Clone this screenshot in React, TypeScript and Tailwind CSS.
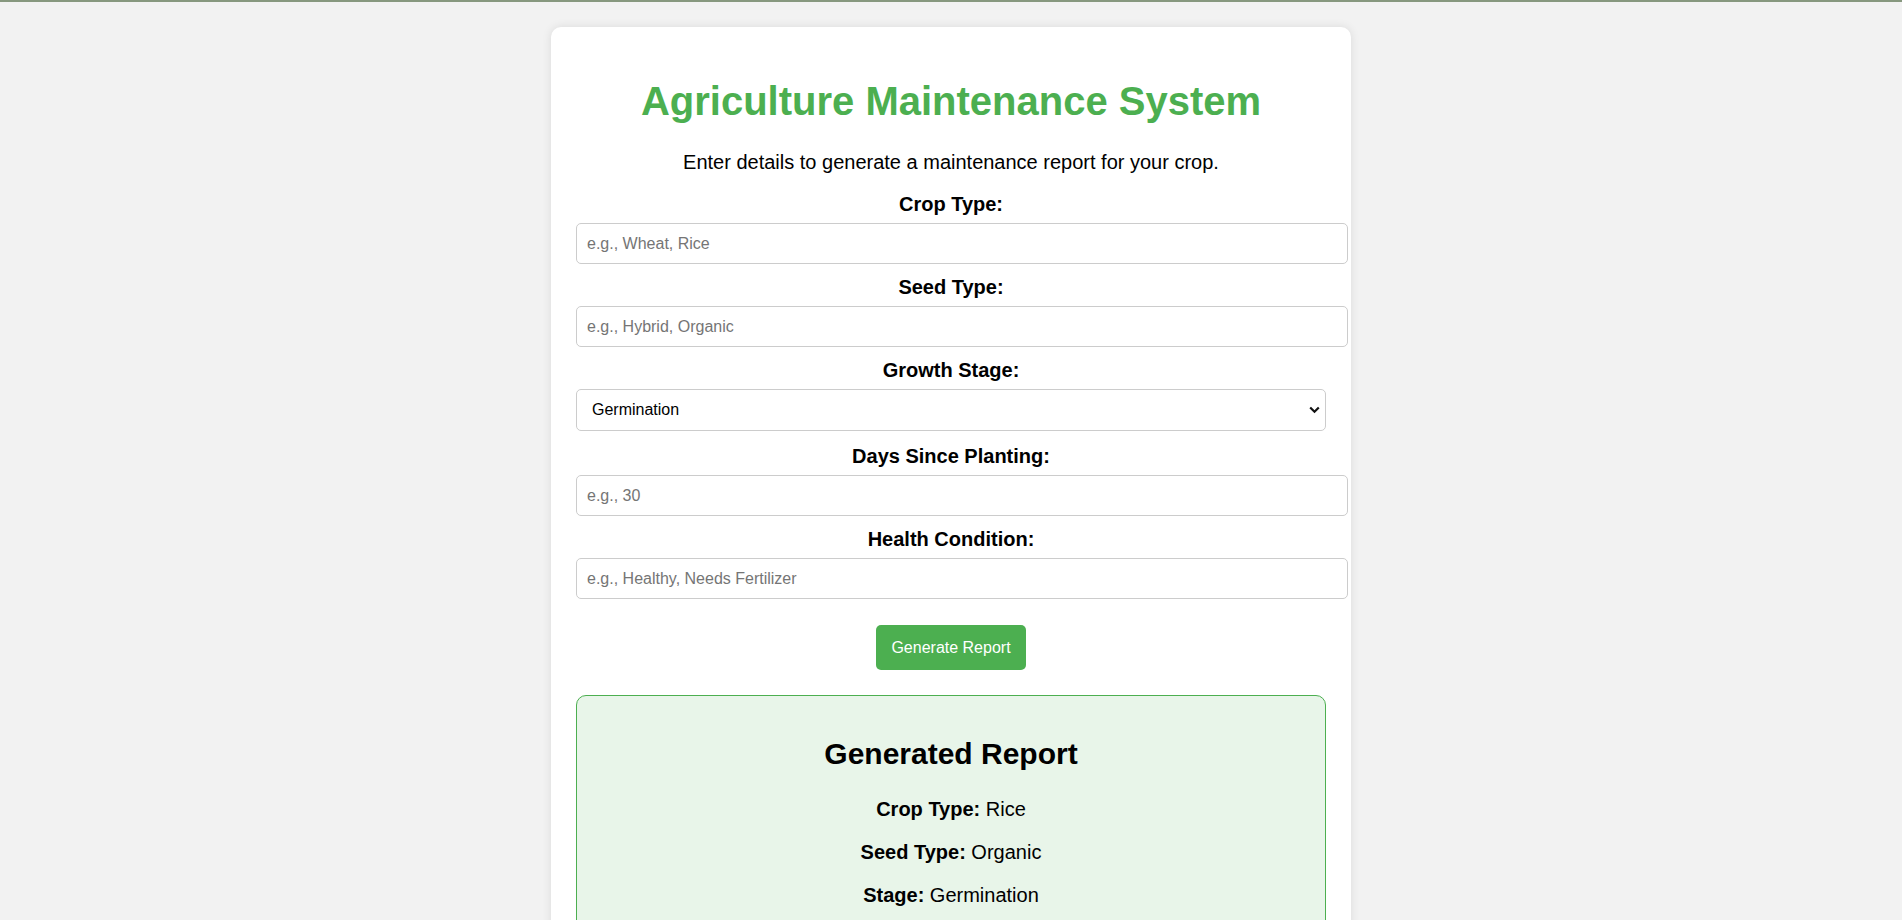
import React, { useState } from 'react';

const stages = ['Germination', 'Vegetative', 'Flowering', 'Fruiting', 'Harvest'];

const App: React.FC = () => {
  const [cropType, setCropType] = useState('');
  const [seedType, setSeedType] = useState('');
  const [stage, setStage] = useState('Germination');
  const [days, setDays] = useState('');
  const [health, setHealth] = useState('');

  const inputClass =
    'block w-[772px] h-[41px] mt-[7px] px-[10px] border border-[#cccccc] rounded-[5px] bg-white text-[16px] text-black placeholder:text-[#757575] outline-none';

  return (
    <div className="min-h-screen bg-[#f2f2f2] border-t-2 border-[#87987f] pt-[25px] font-['Liberation_Sans',Arial,sans-serif] text-[20px] text-black">
      <div className="mx-auto w-[800px] bg-white rounded-[10px] shadow-[0_0_10px_rgba(0,0,0,0.1)] p-[25px]">
        <h1 className="mt-[26px] text-center text-[40px] leading-[46px] font-bold text-[#4caf50]">
          Agriculture Maintenance System
        </h1>
        <p className="mt-[27px] text-center leading-[23px]">
          Enter details to generate a maintenance report for your crop.
        </p>

        <form onSubmit={(e) => e.preventDefault()}>
          <label className="block mt-[19px] text-center font-bold leading-[23px]">Crop Type:</label>
          <input
            className={inputClass}
            placeholder="e.g., Wheat, Rice"
            value={cropType}
            onChange={(e) => setCropType(e.target.value)}
          />

          <label className="block mt-[12px] text-center font-bold leading-[23px]">Seed Type:</label>
          <input
            className={inputClass}
            placeholder="e.g., Hybrid, Organic"
            value={seedType}
            onChange={(e) => setSeedType(e.target.value)}
          />

          <label className="block mt-[12px] text-center font-bold leading-[23px]">Growth Stage:</label>
          <div className="relative mt-[7px]">
            <select
              className="block w-full h-[42px] pl-[15px] pr-[30px] appearance-none border border-[#cccccc] rounded-[5px] bg-white text-[16px] text-black outline-none"
              value={stage}
              onChange={(e) => setStage(e.target.value)}
            >
              {stages.map((s) => (
                <option key={s}>{s}</option>
              ))}
            </select>
            <svg
              className="pointer-events-none absolute right-[6px] top-[17px] w-[11px] h-[8px]"
              viewBox="0 0 11 8"
              fill="none"
            >
              <path d="M1.2 1.5 L5.5 5.8 L9.8 1.5" stroke="#111" strokeWidth="2.2" />
            </svg>
          </div>

          <label className="block mt-[14px] text-center font-bold leading-[23px]">Days Since Planting:</label>
          <input
            className={inputClass}
            placeholder="e.g., 30"
            value={days}
            onChange={(e) => setDays(e.target.value)}
          />

          <label className="block mt-[12px] text-center font-bold leading-[23px]">Health Condition:</label>
          <input
            className={inputClass}
            placeholder="e.g., Healthy, Needs Fertilizer"
            value={health}
            onChange={(e) => setHealth(e.target.value)}
          />

          <div className="flex justify-center mt-[26px]">
            <button
              type="submit"
              className="h-[45px] px-[15px] bg-[#4caf50] text-white text-[16px] rounded-[5px]"
            >
              Generate Report
            </button>
          </div>
        </form>

        {/* report */}
        <div className="mt-[25px] border border-[#4caf50] bg-[#e8f5e9] rounded-[10px] p-[15px] text-center">
          <h2 className="mt-[26px] text-[30px] leading-[34.5px] font-bold">Generated Report</h2>
          <p className="mt-[26px] leading-[23px]">
            <strong>Crop Type:</strong> Rice
          </p>
          <p className="mt-[20px] leading-[23px]">
            <strong>Seed Type:</strong> Organic
          </p>
          <p className="mt-[20px] leading-[23px]">
            <strong>Stage:</strong> Germination
          </p>
          <p className="mt-[20px] leading-[23px]">
            <strong>Days Since Planting:</strong> 30
          </p>
          <p className="mt-[20px] leading-[23px]">
            <strong>Health Condition:</strong> Healthy
          </p>
          <p className="mt-[20px] mb-[25px] leading-[23px]">
            <strong>Recommendation:</strong> Keep the soil moist and monitor for pests.
          </p>
        </div>
      </div>
    </div>
  );
};

export default App;
